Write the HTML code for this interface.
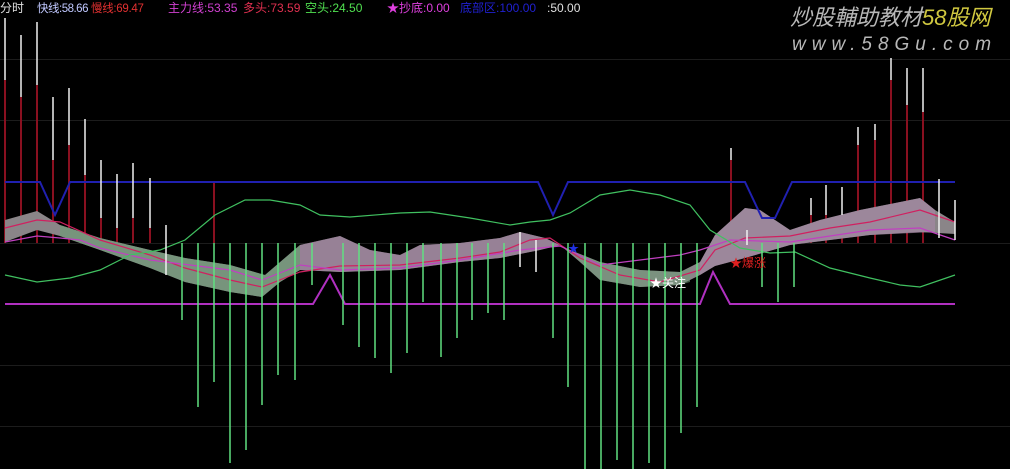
<!DOCTYPE html>
<html><head><meta charset="utf-8"><style>
html,body{margin:0;padding:0;background:#000;width:1010px;height:469px;overflow:hidden}
svg{display:block}
text{font-family:"Liberation Sans","Noto Sans CJK SC",sans-serif}
</style></head><body>
<svg width="1010" height="469" viewBox="0 0 1010 469" xmlns="http://www.w3.org/2000/svg">
<rect width="1010" height="469" fill="#000"/>
<g stroke="#1c1c1c" stroke-width="1">
<line x1="0" y1="59.5" x2="1010" y2="59.5"/>
<line x1="0" y1="120.5" x2="1010" y2="120.5"/>
<line x1="0" y1="243.5" x2="1010" y2="243.5"/>
<line x1="0" y1="365.5" x2="1010" y2="365.5"/>
<line x1="0" y1="426.5" x2="1010" y2="426.5"/>
</g>
<g stroke="#8a1020" stroke-width="2">
<line x1="5" y1="80" x2="5" y2="243"/><line x1="21" y1="97" x2="21" y2="243"/><line x1="37" y1="85" x2="37" y2="243"/>
<line x1="53" y1="160" x2="53" y2="243"/><line x1="69" y1="145" x2="69" y2="243"/><line x1="85" y1="175" x2="85" y2="243"/>
<line x1="101" y1="218" x2="101" y2="243"/><line x1="117" y1="228" x2="117" y2="243"/><line x1="133" y1="218" x2="133" y2="243"/><line x1="150" y1="228" x2="150" y2="243"/>
<line x1="214" y1="182" x2="214" y2="243"/>
<line x1="731" y1="160" x2="731" y2="243"/><line x1="858" y1="145" x2="858" y2="243"/><line x1="875" y1="140" x2="875" y2="243"/>
<line x1="891" y1="80" x2="891" y2="243"/><line x1="907" y1="105" x2="907" y2="243"/><line x1="923" y1="112" x2="923" y2="243"/>
<line x1="811" y1="215" x2="811" y2="243"/><line x1="826" y1="215" x2="826" y2="243"/><line x1="842" y1="215" x2="842" y2="243"/>
</g>
<polygon fill="#8a8588" points="5,220 37,211 60,225 100,238 150,250 185,258 230,265 265,275 300,245 340,236 370,250 400,255 420,245 460,243 500,238 520,232 545,238 570,250 600,262 640,270 680,272 700,262 715,235 745,208 760,210 790,230 820,220 860,210 920,198 935,210 955,222 955,234 920,232 870,235 830,240 790,245 745,258 715,266 700,275 680,285 640,287 600,280 580,262 560,245 540,250 500,258 460,262 400,270 340,272 300,270 280,282 262,297 230,292 185,282 150,268 100,250 60,236 37,230 5,242"/>
<polygon fill="#6f9a78" opacity="0.7" points="60,225 100,238 150,250 185,258 230,265 265,275 300,245 300,270 280,282 262,297 230,292 185,282 150,268 100,250 60,236"/>
<polygon fill="#6f9a78" opacity="0.55" points="570,250 600,262 640,270 680,272 690,268 690,282 680,285 640,287 600,280 580,262"/>
<polygon fill="#a07fa0" opacity="0.6" points="300,245 340,236 370,250 400,255 420,245 460,243 500,238 520,232 545,238 560,245 540,250 500,258 460,262 400,270 340,272 300,270"/>
<polygon fill="#a888a8" opacity="0.6" points="700,262 715,235 745,208 760,210 790,230 820,220 860,210 920,198 935,210 935,232 870,235 790,245 745,258 715,266 700,275"/>
<polyline fill="none" stroke="#2020b0" stroke-width="2" points="5,182 40,182 55,215 70,182 538,182 553,215 568,182 745,182 762,218 775,218 792,182 955,182"/>
<polyline fill="none" stroke="#b030c0" stroke-width="2" points="5,304 313,304 330,275 345,304 700,304 713,272 730,304 955,304"/>
<polyline fill="none" stroke="#d02060" stroke-width="1.2" points="5,228 37,220 60,222 100,240 150,255 185,268 230,280 262,287 300,272 340,266 400,265 460,258 500,252 530,240 550,238 580,258 620,275 660,282 700,270 715,250 745,238 790,236 830,228 870,222 920,210 955,222"/>
<polyline fill="none" stroke="#c040c0" stroke-width="1.2" points="5,242 37,236 60,238 80,240 100,248 150,260 230,270 262,280 300,265 340,270 400,268 460,260 520,250 560,246 600,265 640,260 680,255 700,250 730,240 790,242 870,230 920,228 955,240"/>
<polyline fill="none" stroke="#40c060" stroke-width="1.2" points="5,275 37,282 70,278 100,270 130,255 160,250 185,240 215,215 245,200 270,200 300,205 320,215 350,217 400,213 430,212 470,218 510,225 530,222 550,220 570,213 600,195 630,190 660,195 690,205 710,230 740,248 770,253 795,252 830,268 870,278 900,285 920,287 955,275"/>
<g stroke="#f0f0f0" stroke-width="1.5">
<line x1="5" y1="18" x2="5" y2="80"/><line x1="21" y1="35" x2="21" y2="97"/><line x1="37" y1="22" x2="37" y2="85"/>
<line x1="53" y1="97" x2="53" y2="160"/><line x1="69" y1="88" x2="69" y2="145"/><line x1="85" y1="119" x2="85" y2="175"/>
<line x1="101" y1="160" x2="101" y2="218"/><line x1="117" y1="174" x2="117" y2="228"/><line x1="133" y1="163" x2="133" y2="218"/><line x1="150" y1="178" x2="150" y2="228"/>
<line x1="166" y1="225" x2="166" y2="275"/>
<line x1="731" y1="148" x2="731" y2="160"/><line x1="811" y1="198" x2="811" y2="215"/><line x1="826" y1="185" x2="826" y2="215"/><line x1="842" y1="187" x2="842" y2="215"/>
<line x1="858" y1="127" x2="858" y2="145"/><line x1="875" y1="124" x2="875" y2="140"/><line x1="891" y1="58" x2="891" y2="80"/>
<line x1="907" y1="68" x2="907" y2="105"/><line x1="923" y1="68" x2="923" y2="112"/><line x1="939" y1="179" x2="939" y2="238"/><line x1="955" y1="200" x2="955" y2="240"/>
<line x1="520" y1="232" x2="520" y2="267"/><line x1="536" y1="240" x2="536" y2="272"/><line x1="747" y1="230" x2="747" y2="245"/>
</g>
<g stroke="#60e080" stroke-width="1.5">
<line x1="182" y1="243" x2="182" y2="320"/><line x1="198" y1="243" x2="198" y2="407"/><line x1="214" y1="243" x2="214" y2="382"/>
<line x1="230" y1="243" x2="230" y2="463"/><line x1="246" y1="243" x2="246" y2="450"/><line x1="262" y1="243" x2="262" y2="405"/>
<line x1="278" y1="243" x2="278" y2="375"/><line x1="295" y1="243" x2="295" y2="380"/><line x1="312" y1="243" x2="312" y2="285"/>
<line x1="343" y1="243" x2="343" y2="325"/><line x1="359" y1="243" x2="359" y2="347"/><line x1="375" y1="243" x2="375" y2="358"/>
<line x1="391" y1="243" x2="391" y2="373"/><line x1="407" y1="243" x2="407" y2="353"/><line x1="423" y1="243" x2="423" y2="302"/>
<line x1="441" y1="243" x2="441" y2="357"/><line x1="457" y1="243" x2="457" y2="338"/><line x1="472" y1="243" x2="472" y2="320"/>
<line x1="488" y1="243" x2="488" y2="313"/><line x1="504" y1="243" x2="504" y2="320"/><line x1="553" y1="243" x2="553" y2="338"/>
<line x1="568" y1="243" x2="568" y2="387"/><line x1="585" y1="243" x2="585" y2="469"/><line x1="601" y1="243" x2="601" y2="469"/>
<line x1="617" y1="243" x2="617" y2="460"/><line x1="633" y1="243" x2="633" y2="469"/><line x1="649" y1="243" x2="649" y2="463"/>
<line x1="665" y1="243" x2="665" y2="469"/><line x1="681" y1="243" x2="681" y2="433"/><line x1="697" y1="243" x2="697" y2="407"/>
<line x1="762" y1="243" x2="762" y2="287"/><line x1="778" y1="243" x2="778" y2="302"/><line x1="794" y1="243" x2="794" y2="287"/>
</g>
<text x="568" y="252" font-size="11" fill="#2030e0">★</text>
<text x="650" y="287" font-size="12" fill="#ffffff">★关注</text>
<text x="730" y="267" font-size="12" fill="#e02020">★爆涨</text>
<g font-size="12">
<text x="0" y="12" fill="#e0e0e0">分时</text>
<text x="37" y="12" fill="#c0c8ff" font-size="11.5" letter-spacing="-0.5">快线:58.66</text>
<text x="91" y="12" fill="#e03030" font-size="11.5" letter-spacing="-0.3">慢线:69.47</text>
<text x="168" y="12" fill="#d040d0">主力线:53.35</text>
<text x="243" y="12" fill="#e03050">多头:73.59</text>
<text x="305" y="12" fill="#50e050">空头:24.50</text>
<text x="387" y="12" fill="#e040e0">★抄底:0.00</text>
<text x="460" y="12" fill="#2020d0">底部区:100.00</text>
<text x="547" y="12" fill="#e0e0e0">:50.00</text>
</g>
<text x="790" y="25" font-size="22" font-style="italic" fill="#b8b8b8">炒股輔助教材<tspan fill="#d0c840">58股网</tspan></text>
<text x="792" y="50" font-size="19" font-style="italic" fill="#b8b8b8" letter-spacing="6">www.58Gu.com</text>
</svg>
</body></html>
